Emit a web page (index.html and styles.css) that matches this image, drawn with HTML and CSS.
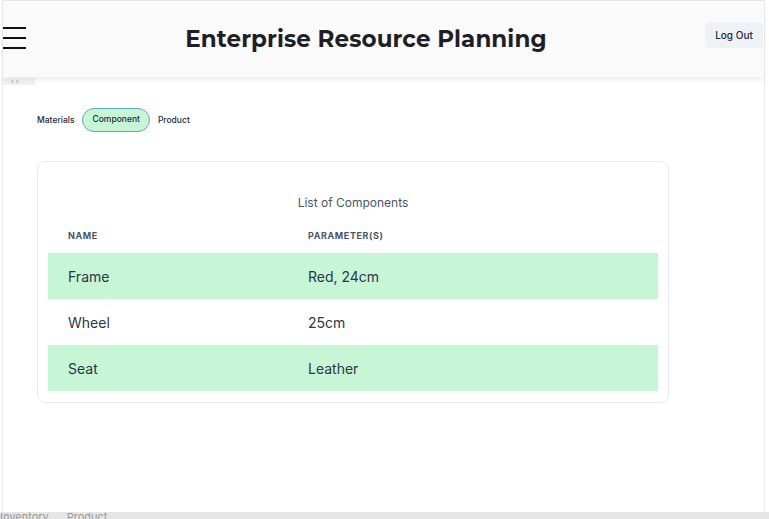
FILE: index.html
```html
<!DOCTYPE html>
<html>
<head>
<meta charset="utf-8">
<link rel="stylesheet" href="styles.css">
</head>
<body>
<div class="frame">
  <header class="topbar">
    <div class="burger"><span></span><span></span><span></span></div>
    <h1 class="title">Enterprise Resource Planning</h1>
    <button class="logout">Log Out</button>
  </header>
  <div class="toggle"><span>‹ ›</span></div>
  <main class="main">
    <nav class="tabs">
      <span class="tab">Materials</span>
      <span class="tab active">Component</span>
      <span class="tab">Product</span>
    </nav>
    <section class="card">
      <table class="table">
        <caption>List of Components</caption>
        <thead>
          <tr><th class="c1">Name</th><th>Parameter(s)</th></tr>
        </thead>
        <tbody>
          <tr class="hl"><td>Frame</td><td>Red, 24cm</td></tr>
          <tr><td>Wheel</td><td>25cm</td></tr>
          <tr class="hl"><td>Seat</td><td>Leather</td></tr>
        </tbody>
      </table>
    </section>
  </main>
</div>
<footer class="strip"><span>Inventory</span><span>Product</span></footer>
</body>
</html>
```
FILE: styles.css
```css
* { box-sizing: border-box; }
html, body { margin: 0; padding: 0; }
body {
  width: 769px;
  height: 519px;
  overflow: hidden;
  background: #ffffff;
  font-family: Inter, "Noto Sans", sans-serif;
  color: #2d3748;
}
.frame {
  height: 512px;
  border-top: 1px solid #e6e6e6;
  border-left: 1px solid #ececec;
  border-right: 1px solid #ececec;
  margin-left: 2px;
  margin-right: 4px;
  position: relative;
}
.topbar {
  height: 76px;
  background: #fafafa;
  display: flex;
  align-items: center;
  justify-content: space-between;
  box-shadow: 0 3px 5px rgba(0,0,0,0.07);
  position: relative;
  z-index: 1;
  padding: 0 1px 0 0;
}
.burger {
  width: 23px;
  display: flex;
  flex-direction: column;
  gap: 8px;
  margin-top: -2px;
}
.burger span {
  display: block;
  height: 2px;
  background: #111;
}
.title {
  margin: 0 0 0 1px;
  font-family: Montserrat, "Open Sans", sans-serif;
  font-weight: 700;
  font-size: 23px;
  color: #1e1f26;
  letter-spacing: 0.1px;
}
.logout {
  font-family: Inter, sans-serif;
  font-size: 10px;
  font-weight: 500;
  color: #1f2937;
  background: #edf2f7;
  border: none;
  border-radius: 4px;
  width: 58px;
  height: 26px;
  margin-top: -8px;
  padding: 0;
}
.toggle {
  position: absolute;
  left: -2px;
  top: 77px;
  width: 34px;
  height: 7px;
  background: #f1f1f3;
  font-size: 7px;
  line-height: 7px;
  color: #999;
  padding-left: 10px;
  overflow: hidden;
}
.main {
  padding: 31px 0 0 34px;
}
.tabs {
  display: flex;
  align-items: center;
  gap: 8px;
  height: 24px;
}
.tab {
  font-size: 8.5px;
  font-weight: 500;
  color: #1f2937;
}
.tab.active {
  background: #c6f6d5;
  border: 1.5px solid #5fa8c0;
  border-radius: 12px;
  height: 24px;
  line-height: 21px;
  padding: 0 9px;
}
.card {
  margin-top: 29px;
  width: 632px;
  height: 242px;
  border: 1px solid #e8e9ec;
  border-radius: 8px;
  padding: 0 10px;
}
.table {
  width: 100%;
  border-collapse: collapse;
}
.table caption {
  padding: 33px 0 0;
  height: 51px;
  font-size: 12px;
  color: #4a5568;
}
.table th {
  text-align: left;
  font-size: 9px;
  font-weight: 700;
  letter-spacing: 0.6px;
  text-transform: uppercase;
  color: #4a5568;
  height: 40px;
  padding: 4px 20px 0 20px;
  vertical-align: middle;
}
.table th.c1 { width: 240px; }
.table td {
  height: 46px;
  padding: 0 20px;
  font-size: 14px;
  color: #2d3748;
}
.table tr.hl td { background: #c6f6d5; }
.strip {
  height: 7px;
  background: #e5e5e5;
  display: flex;
  gap: 18px;
  font-size: 11px;
  line-height: 18px;
  color: #9a9a9a;
  overflow: hidden;
  padding-left: 0;
}
.strip span { margin-top: -4px; }
```
